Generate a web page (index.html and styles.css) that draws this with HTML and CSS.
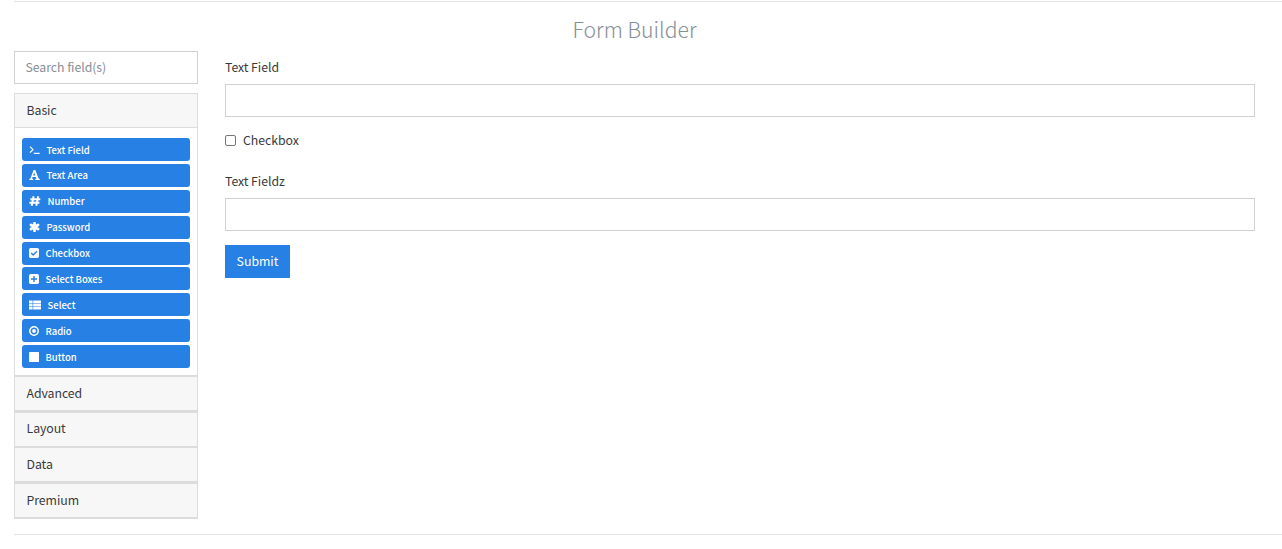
FILE: index.html
```
<!DOCTYPE html>
<html lang="en">
<head>
    <meta charset="UTF-8">
    <meta name="viewport" content="width=device-width, initial-scale=1.0">
    <title>Form Builder</title>
    <link rel="stylesheet" href="styles.css">
</head>
<body>
    <div class="main-container">
        <h3 class="title">Form Builder</h3>
        <div class="formbuilder">
            <div class="sidebar">
                <input class="form-control search" type="search" placeholder="Search field(s)">
                <div class="card basic">
                    <div class="card-header">Basic</div>
                    <div class="card-body">
                        <button class="component"><svg class="icon" width="11" height="10" viewBox="0 0 11 10"><path d="M1 1.7l3 3-3 3M4.8 8.4h5.8" fill="none" stroke="#fff" stroke-width="1.2"/></svg>Text Field</button>
                        <button class="component"><svg class="icon" width="11" height="10" viewBox="0 0 11 10"><path d="M4.6 0h1.7l3.3 8.5 1.2.4V10H6.3V8.9l1.1-.3-.6-1.7H3.6L3 8.6l1.2.3V10H.3V8.9l1.1-.4zM5.2 2.4L4.1 5.5h2.2z" fill="#fff"/></svg>Text Area</button>
                        <button class="component"><svg class="icon" width="12" height="10" viewBox="0 0 12 10"><path d="M4.6.3L2.7 9.7M9.2.3L7.3 9.7M1.3 3.2h10M.4 6.8h10" fill="none" stroke="#fff" stroke-width="2"/></svg>Number</button>
                        <button class="component"><svg class="icon" width="11" height="10" viewBox="0 0 11 10"><path d="M5.5 1.2v7.6M2 3l7 4M9 3L2 7" fill="none" stroke="#fff" stroke-width="2.8" stroke-linecap="round"/></svg>Password</button>
                        <button class="component"><svg class="icon" width="10" height="10" viewBox="0 0 10 10"><rect width="10" height="10" rx="1.7" fill="#fff"/><path d="M2.2 4.9l2 2 3.7-3.7" fill="none" stroke="#2780e3" stroke-width="1.4"/></svg>Checkbox</button>
                        <button class="component"><svg class="icon" width="10" height="10" viewBox="0 0 10 10"><rect width="10" height="10" rx="1.7" fill="#fff"/><path d="M5 2v6M2 5h6" fill="none" stroke="#2780e3" stroke-width="1.4"/></svg>Select Boxes</button>
                        <button class="component"><svg class="icon" width="12" height="10" viewBox="0 0 12 10"><path d="M0 .4h3.6v2.6H0zM4.2 .4h7.8v2.6H4.2zM0 3.6h3.6v2.6H0zM4.2 3.6h7.8v2.6H4.2zM0 6.8h3.6v2.6H0zM4.2 6.8h7.8v2.6H4.2z" fill="#fff"/></svg>Select</button>
                        <button class="component"><svg class="icon" width="10" height="10" viewBox="0 0 10 10"><circle cx="5" cy="5" r="4.2" fill="none" stroke="#fff" stroke-width="1.5"/><circle cx="5" cy="5" r="1.9" fill="#fff"/></svg>Radio</button>
                        <button class="component"><svg class="icon" width="10" height="10" viewBox="0 0 10 10"><rect width="10" height="10" rx=".4" fill="#fff"/></svg>Button</button>
                    </div>
                </div>
                <div class="card"><div class="card-header">Advanced</div></div>
                <div class="card"><div class="card-header">Layout</div></div>
                <div class="card"><div class="card-header">Data</div></div>
                <div class="card"><div class="card-header">Premium</div></div>
            </div>
            <form class="formarea" onsubmit="return false">
                <label class="field-label" for="text-field">Text Field</label>
                <input id="text-field" class="form-control" type="text">
                <label class="check"><input class="check-input" type="checkbox">Checkbox</label>
                <label class="field-label" for="text-fieldz">Text Fieldz</label>
                <input id="text-fieldz" class="form-control" type="text">
                <button class="submit" type="submit">Submit</button>
            </form>
        </div>
    </div>
</body>
</html>
```
FILE: styles.css
```
* {
    box-sizing: border-box;
}
body {
    margin: 0;
    font-family: "Noto Sans CJK SC", "Open Sans", sans-serif;
    font-size: 12.3px;
    line-height: 20px;
    letter-spacing: -0.05px;
    color: #373a3c;
    background-color: #fff;
}
.main-container {
    margin: 1px 0 0 14px;
    height: 534px;
    border-top: 1px solid #e3e3e3;
    border-bottom: 1px solid #e3e3e3;
}
.title {
    margin: 13px 27px 0 0;
    height: 36px;
    font-size: 21.2px;
    font-weight: 300;
    line-height: 27px;
    letter-spacing: 0;
    text-align: center;
    color: #868e96;
}
.formbuilder {
    display: flex;
    gap: 27px;
    padding-right: 27px;
}
.sidebar {
    width: 184px;
}
.form-control {
    display: block;
    width: 100%;
    height: 33px;
    padding: 0 10.5px;
    border: 1px solid #cfd1d3;
    border-radius: 0;
    font: inherit;
    letter-spacing: inherit;
    outline: none;
}
.search {
    margin-bottom: 9px;
    padding-bottom: 1px;
    appearance: none;
}
.search::placeholder {
    color: #868e96;
}
.card {
    height: 35.8px;
    border: 1px solid #dcdcdc;
}
.basic {
    height: 282.8px;
}
.card-header {
    height: 34px;
    padding: 5.8px 11.5px;
    border-bottom: 1px solid #dcdcdc;
    background-color: #f7f7f7;
}
.card-body {
    display: flex;
    flex-direction: column;
    gap: 2.9px;
    padding: 10px 7px 0;
}
.component {
    display: flex;
    align-items: center;
    height: 23px;
    padding: 1px 0 0 7px;
    border: 0;
    border-radius: 3px;
    background-color: #2780e3;
    color: #fff;
    font-family: inherit;
    font-size: 9.5px;
    font-weight: 500;
    line-height: 15px;
}
.icon {
    margin: -1px 6.5px 0 0;
}
.formarea {
    flex: 1;
    padding-top: 6px;
}
.field-label {
    display: block;
    height: 27px;
}
.check {
    display: flex;
    align-items: center;
    height: 20px;
    margin: 13px 0 21px;
}
.check-input {
    width: 11px;
    height: 11px;
    margin: 0 7px 0 0;
    appearance: none;
    border: 1px solid #767676;
    border-radius: 2px;
}
.check-input:checked {
    background-color: #2780e3;
}
.submit {
    display: block;
    width: 65px;
    height: 33px;
    margin-top: 14px;
    padding: 0 0 1px;
    border: 0;
    background-color: #2780e3;
    color: #fff;
    font: inherit;
}
```
